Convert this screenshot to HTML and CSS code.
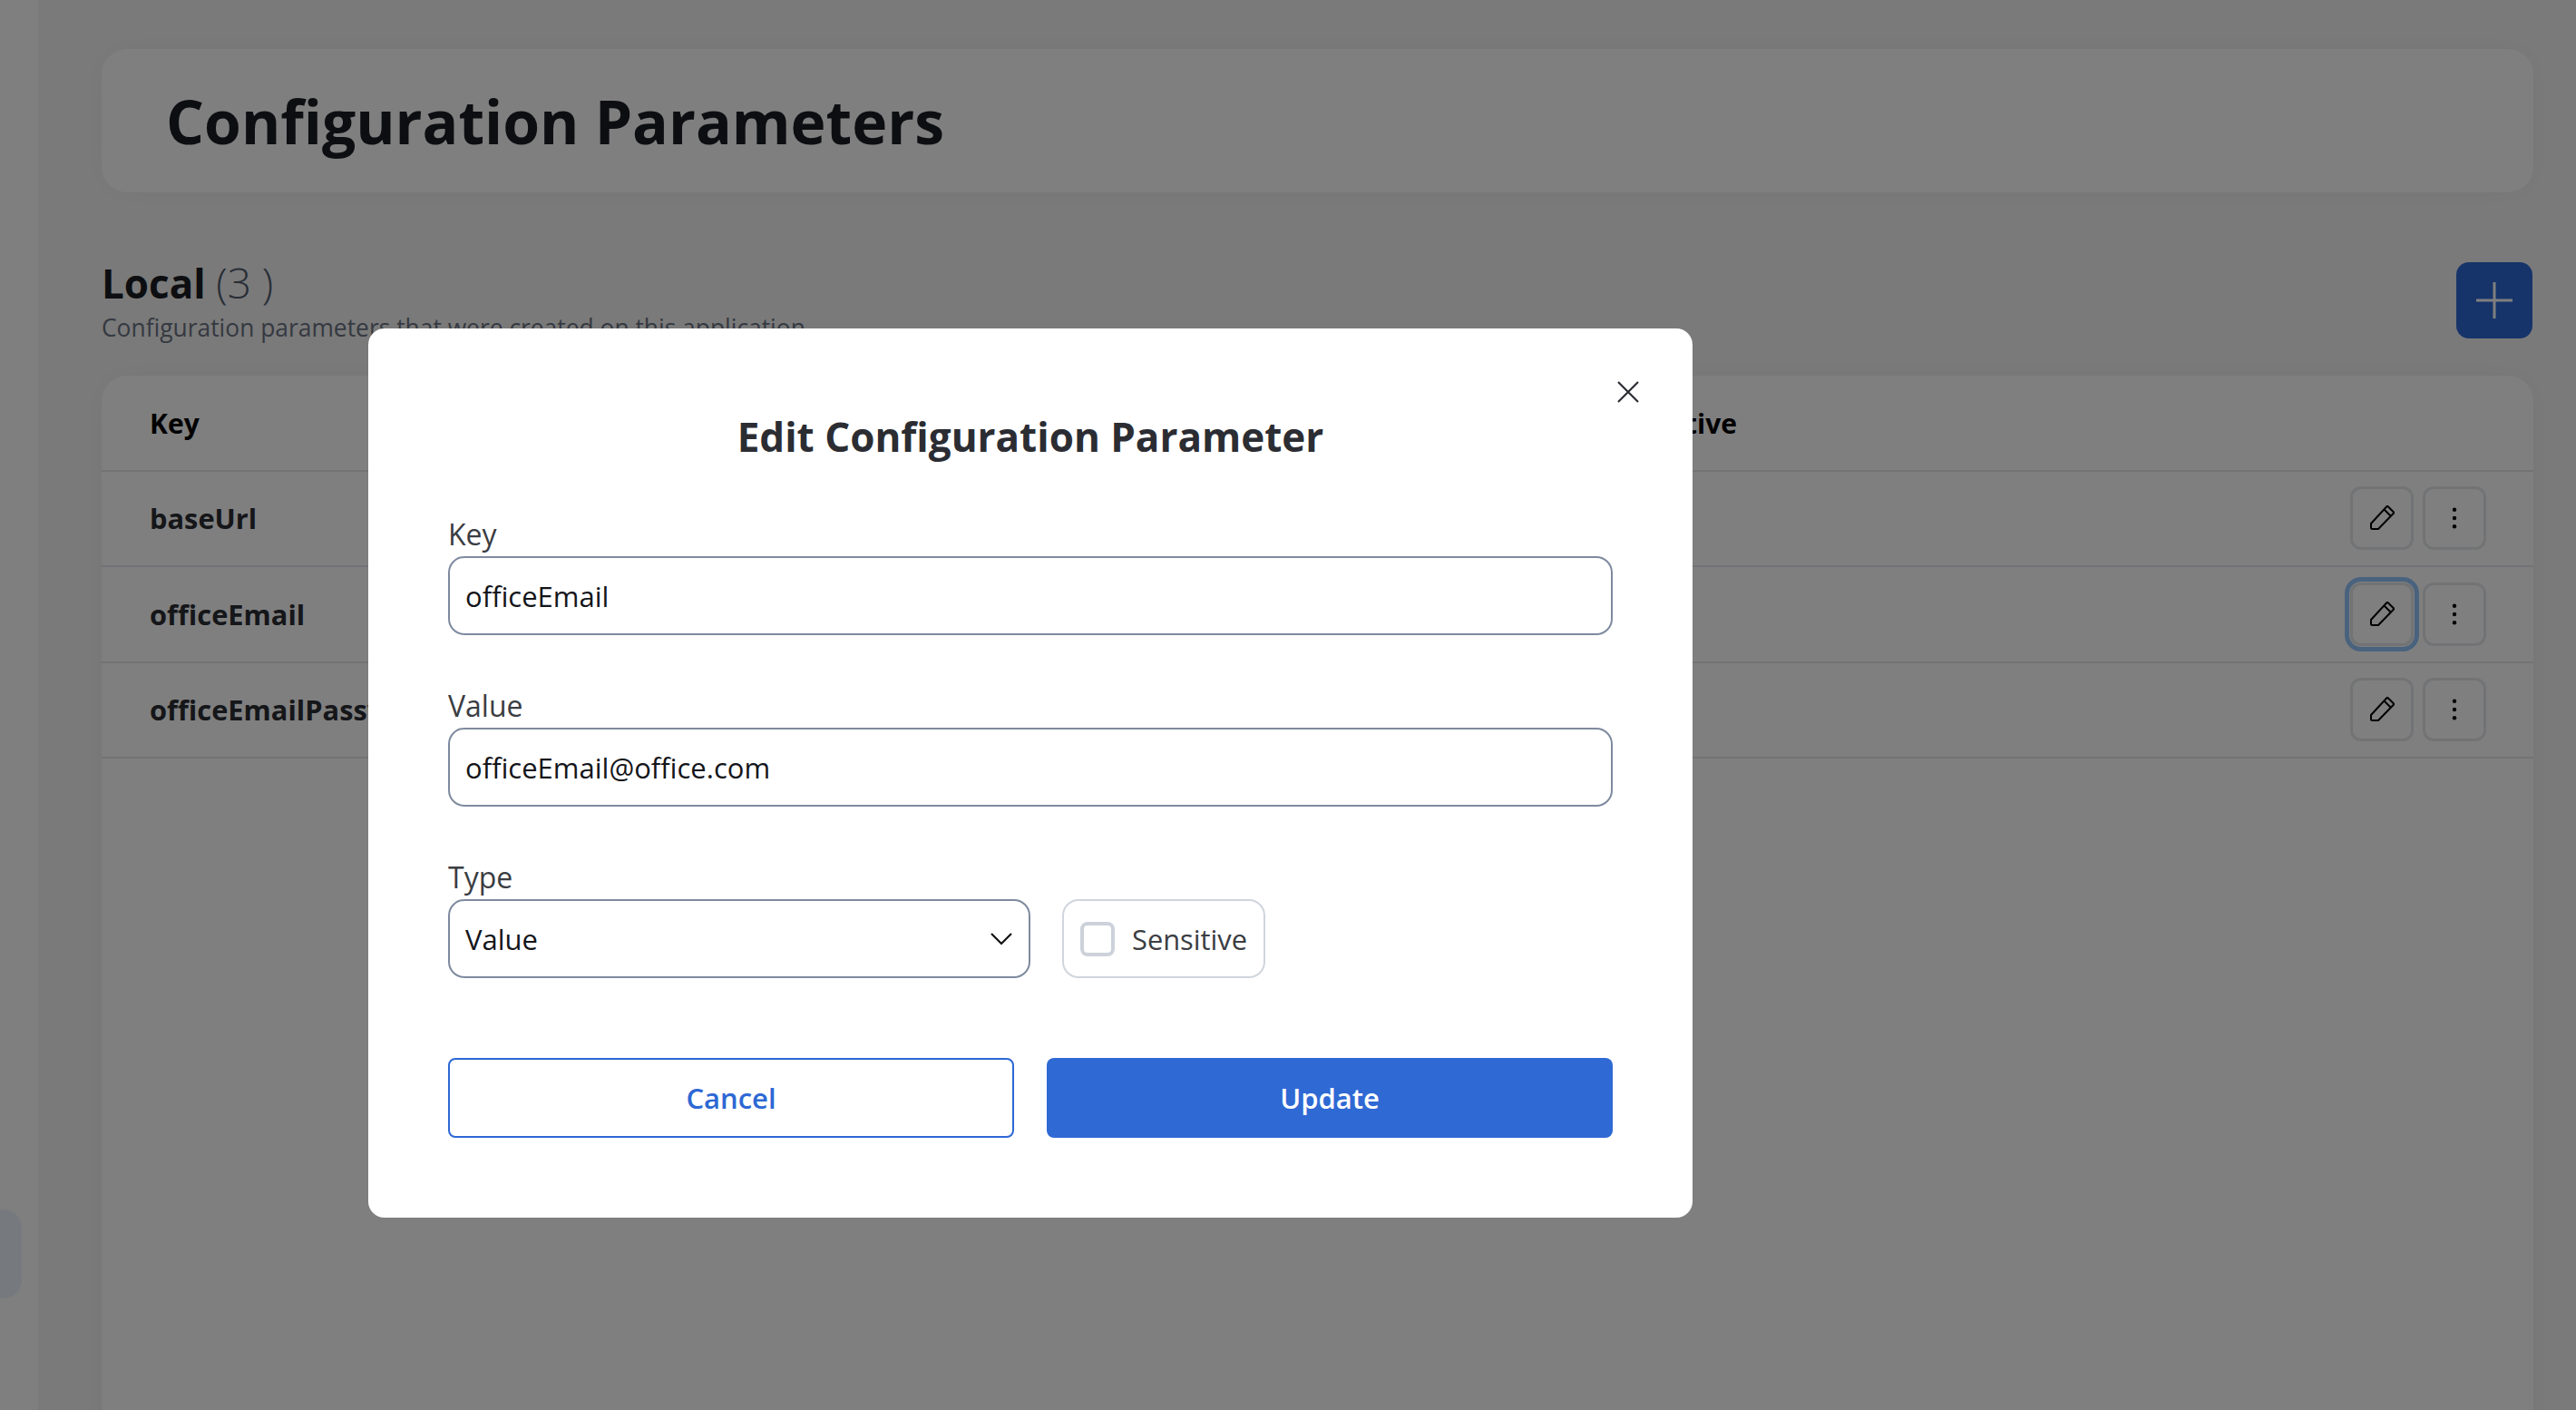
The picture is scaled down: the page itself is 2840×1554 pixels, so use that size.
FILE: index.html
```html
<!DOCTYPE html>
<html lang="en">
<head>
<meta charset="utf-8">
<title>Configuration Parameters</title>
<link rel="stylesheet" href="styles.css">
</head>
<body>
<div class="page">
  <aside class="rail"><span class="rail-tab"></span></aside>
  <main class="main">
    <header class="title-card"><h1>Configuration Parameters</h1></header>
    <section class="section-head">
      <div>
        <h2>Local <span class="count">(3 )</span></h2>
        <p>Configuration parameters that were created on this application.</p>
      </div>
      <button class="add" type="button" aria-label="Add">
        <svg viewBox="0 0 40 40" width="40" height="40"><path d="M20 0v40M0 20h40" fill="none" stroke="#fff" stroke-width="3"/></svg>
      </button>
    </section>
    <section class="table">
      <div class="row head"><span class="key">Key</span><span class="sens">Sensitive</span></div>
      <div class="row">
        <span class="key">baseUrl</span><span class="sens"></span>
        <div class="actions">
          <button class="act" type="button" aria-label="Edit"><svg viewBox="-1 1 28 28" width="28" height="28"><path d="M1 21L19 1.5 26.5 9 9 27H2.5Q1 27 1 25.5ZM15.5 5.5L23 13" fill="none" stroke="#000" stroke-width="2" stroke-linejoin="round"/></svg></button>
          <button class="act" type="button" aria-label="More"><svg viewBox="0 0 6 28" width="6" height="28"><circle cx="3" cy="4.7" r="2.2"/><circle cx="3" cy="14" r="2.2"/><circle cx="3" cy="23.3" r="2.2"/></svg></button>
        </div>
      </div>
      <div class="row">
        <span class="key">officeEmail</span><span class="sens"></span>
        <div class="actions">
          <button class="act focused" type="button" aria-label="Edit"><svg viewBox="-1 1 28 28" width="28" height="28"><path d="M1 21L19 1.5 26.5 9 9 27H2.5Q1 27 1 25.5ZM15.5 5.5L23 13" fill="none" stroke="#000" stroke-width="2" stroke-linejoin="round"/></svg></button>
          <button class="act" type="button" aria-label="More"><svg viewBox="0 0 6 28" width="6" height="28"><circle cx="3" cy="4.7" r="2.2"/><circle cx="3" cy="14" r="2.2"/><circle cx="3" cy="23.3" r="2.2"/></svg></button>
        </div>
      </div>
      <div class="row">
        <span class="key">officeEmailPassword</span><span class="sens"></span>
        <div class="actions">
          <button class="act" type="button" aria-label="Edit"><svg viewBox="-1 1 28 28" width="28" height="28"><path d="M1 21L19 1.5 26.5 9 9 27H2.5Q1 27 1 25.5ZM15.5 5.5L23 13" fill="none" stroke="#000" stroke-width="2" stroke-linejoin="round"/></svg></button>
          <button class="act" type="button" aria-label="More"><svg viewBox="0 0 6 28" width="6" height="28"><circle cx="3" cy="4.7" r="2.2"/><circle cx="3" cy="14" r="2.2"/><circle cx="3" cy="23.3" r="2.2"/></svg></button>
        </div>
      </div>
    </section>
  </main>
</div>

<div class="backdrop"></div>

<div class="modal" role="dialog" aria-label="Edit Configuration Parameter">
  <button class="close" type="button" aria-label="Close">
    <svg viewBox="0 0 24 24" width="24" height="24"><path d="M1 1l22 22M23 1L1 23" fill="none" stroke="#2b2d33" stroke-width="2.2"/></svg>
  </button>
  <h3>Edit Configuration Parameter</h3>
  <label class="field">
    <span class="label">Key</span>
    <input class="control" type="text" value="officeEmail">
  </label>
  <label class="field">
    <span class="label">Value</span>
    <input class="control" type="text" value="officeEmail@office.com">
  </label>
  <div class="type-row">
    <label class="field type-field">
      <span class="label">Type</span>
      <div class="select control">
        <span>Value</span>
        <svg viewBox="0 0 24 14" width="24" height="14"><path d="M1 1l11 11L23 1" fill="none" stroke="#111" stroke-width="2.2"/></svg>
      </div>
    </label>
    <label class="sensitive">
      <span class="box"></span>
      <span>Sensitive</span>
    </label>
  </div>
  <div class="buttons">
    <button class="btn cancel" type="button">Cancel</button>
    <button class="btn update" type="button">Update</button>
  </div>
</div>
</body>
</html>
```
FILE: styles.css
```css
* { box-sizing: border-box; }
html, body { margin: 0; height: 100%; overflow: hidden; }
body { font-family: "Open Sans", "Noto Sans", sans-serif; background: #fff; color: #14151a; }
button { font-family: inherit; cursor: pointer; }

.page { display: flex; height: 1554px; overflow: hidden; }
.rail { width: 42px; flex: none; background: #fff; position: relative; }
.rail-tab { position: absolute; left: 0; top: 1333px; width: 24px; height: 98px; background: #ecf4fe; border-radius: 0 20px 20px 0; }

.main { flex: 1; display: flex; flex-direction: column; padding: 54px 47px 0 70px; background: #f5f5f5; min-width: 0; }

.title-card { height: 158px; flex: none; padding-left: 71px; display: flex; align-items: center; background: #fff; border-radius: 28px; box-shadow: 0 0 28px rgba(0,0,0,.04); }
h1 { margin: 0; font-size: 66px; font-weight: 700; line-height: 1; color: #1b1c22; }

.section-head { flex: none; height: 202px; display: flex; justify-content: space-between; align-items: flex-start; padding-top: 69px; }
h2 { margin: 0; font-size: 44px; font-weight: 700; line-height: 60px; color: #1b1c22; }
.count { font-size: 46px; font-weight: 300; color: #4f5a6c; }
.section-head p { margin: 0; font-size: 26.4px; line-height: 38px; color: #6a7282; }
.add { width: 84px; height: 84px; margin: 8px 1px 0 0; border: 0; border-radius: 14px; background: #2d68d4; display: flex; align-items: center; justify-content: center; padding: 0; }

.table { flex: 1; margin-bottom: -60px; background: #fff; border-radius: 28px 28px 0 0; box-shadow: 0 0 28px rgba(0,0,0,.04); }
.row { height: 105.5px; display: flex; align-items: center; padding: 0 52px 0 53px; border-bottom: 2px solid #e5e7eb; font-size: 30.8px; }
.key { width: 1613px; flex: none; font-weight: 700; color: #2b2d33; white-space: nowrap; }
.head { padding-top: 2px; }
.head .key, .head .sens { font-weight: 700; color: #000; font-size: 30px; }
.head .sens { padding-left: 2px; }
.sens { flex: 1; }
.actions { display: flex; gap: 10px; }
.act { width: 70px; height: 70px; padding: 0; background: transparent; border: 3px solid #e5e7eb; border-radius: 12px; display: flex; align-items: center; justify-content: center; }
.focused { box-shadow: 0 0 0 1px #fff, 0 0 0 6px #93c5fd; }

.backdrop { position: fixed; inset: 0; background: rgba(0,0,0,.5); }

.modal { position: fixed; left: 406px; top: 362px; width: 1460px; height: 980px; padding: 88px; background: #fff; border-radius: 18px; color: #2b2d33; }
.close { position: absolute; right: 59px; top: 58px; width: 24px; height: 24px; padding: 0; border: 0; background: none; display: block; }
.close svg { display: block; }
h3 { margin: 0 0 56px; font-size: 44px; font-weight: 700; line-height: 62px; text-align: center; color: #2b2d33; }

.field { display: block; margin-bottom: 57px; }
.label { display: block; font-size: 32px; line-height: 42px; height: 45px; color: #3b3d42; }
.control { display: flex; align-items: center; width: 100%; height: 87px; padding: 0 17px; font: 31px "Open Sans", sans-serif; color: #14151a; background: #fff; border: 2px solid #7e8a9f; border-radius: 18px; outline: 0; }
.type-row { display: flex; gap: 35px; align-items: flex-end; }
.type-field { width: 642px; margin-bottom: 0; }
.select { justify-content: space-between; padding-right: 18px; }
.sensitive { width: 224px; height: 87px; display: flex; align-items: center; gap: 19px; padding-left: 18px; border: 2px solid #d0d5de; border-radius: 18px; font-size: 30.8px; color: #3b3d42; }
.box { width: 38px; height: 38px; border: 4px solid #ccd1da; border-radius: 8px; flex: none; }
.buttons { display: flex; gap: 36px; margin-top: 88px; }
.btn { height: 88px; border-radius: 8px; font-size: 31px; font-weight: 600; }
.cancel { flex: none; width: 624px; background: #fff; color: #2d68d4; border: 2px solid #2d68d4; }
.update { flex: 1; background: #2f69d4; color: #fff; border: 0; }
```
